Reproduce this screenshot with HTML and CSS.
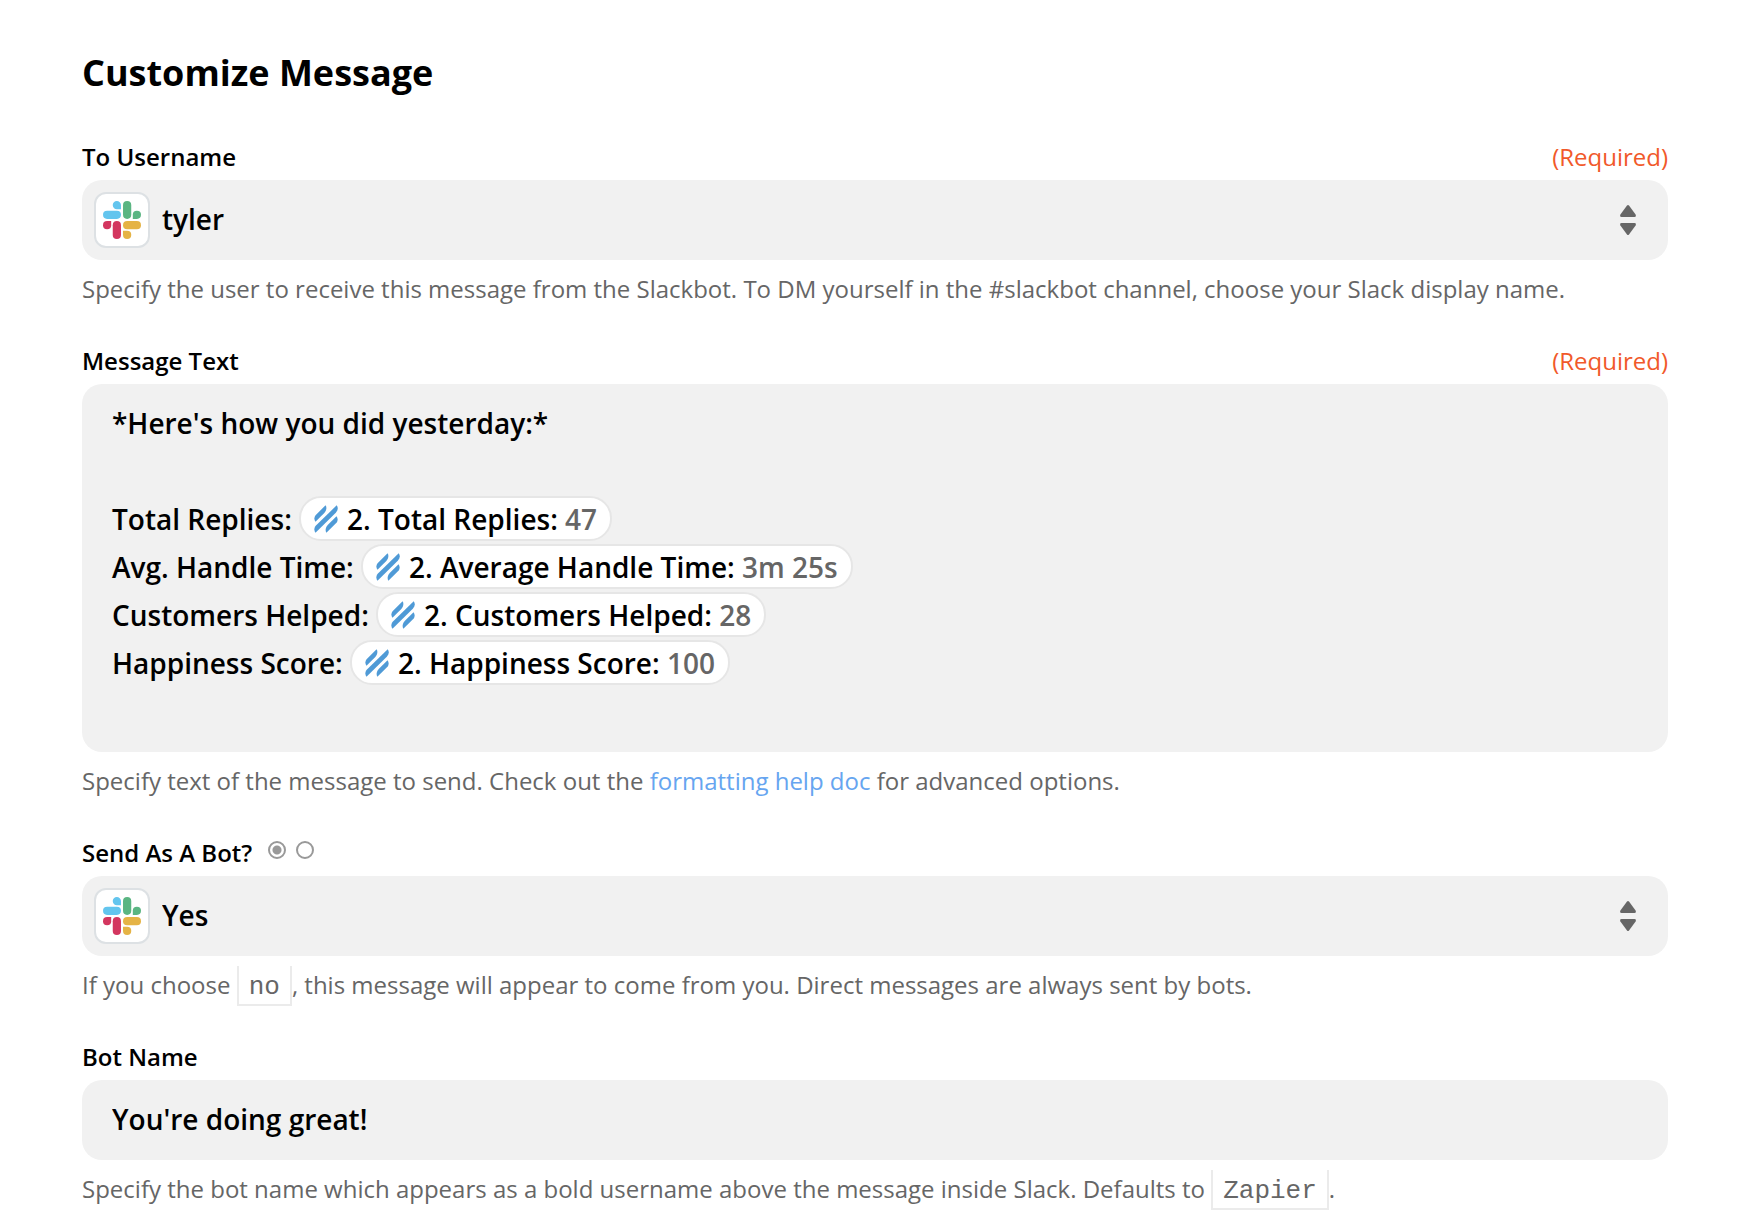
FILE: index.html
```html
<!DOCTYPE html>
<html lang="en">
<head>
    <meta charset="UTF-8">
    <meta name="viewport" content="width=device-width, initial-scale=1">
    <title>Customize Message</title>
    <link rel="stylesheet" href="styles.css">
</head>
<body>
<!-- shared icons -->
<svg class="sprite" aria-hidden="true">
    <symbol id="slack" viewBox="0 0 37 37">
        <g fill="#63c5ee">
            <path d="M17.500 8H13.700a4 4 0 1 1 3.800-4z"/>
            <rect x="0" y="9.500" width="17.500" height="8" rx="4"/>
        </g>
        <g fill="#5ab582">
            <rect x="19.500" y="0" width="8" height="17.500" rx="4"/>
            <path d="M29 17.500V13.500a4 4 0 1 1 4 4z"/>
        </g>
        <g fill="#d3365f">
            <path d="M8 19.500V23.500a4 4 0 1 1-4-4z"/>
            <rect x="9.500" y="19.500" width="8" height="17.500" rx="4"/>
        </g>
        <g fill="#e5b345">
            <rect x="19.500" y="19.500" width="17.500" height="8" rx="4"/>
            <path d="M19.500 29H23.500a4 4 0 1 1-4 4z"/>
        </g>
    </symbol>
    <symbol id="helpscout" viewBox="0 0 24 28">
        <g fill="#4f9ad6">
            <path d="M1.500 16.800 10.300 8C12.500 5.600 13 2.600 11.600.300L2.300 9.400C0 11.800-.2 14.500 1.500 16.800z"/>
            <path d="M1.500 27.700 21.800 7.700C24 5.400 24.400 2.600 22.700.300L2.200 20.300C0 22.600-.2 25.400 1.500 27.700z"/>
            <path d="M22.500 11.200 13.700 20C11.500 22.400 11 25.400 12.400 27.700L21.700 18.600C24 16.200 24.200 13.500 22.500 11.200z"/>
        </g>
    </symbol>
    <symbol id="arrows" viewBox="0 0 16 30">
        <g fill="#666">
            <path d="M7 .6Q8-.4 9 .6L15.600 9.400Q16.500 12 14.500 12H1.500Q-.5 12 .4 9.400z"/>
            <path d="M7 29.400Q8 30.400 9 29.400L15.600 20.600Q16.500 18 14.500 18H1.500Q-.5 18 .4 20.600z"/>
        </g>
    </symbol>
</svg>

<form class="container">
    <h1>Customize Message</h1>

    <div class="field">
        <div class="field-head">
            <label for="username">To Username</label>
            <span class="required">(Required)</span>
        </div>
        <div class="select">
            <span class="app-icon"><svg><use href="#slack"/></svg></span>
            <select id="username">
                <option selected>tyler</option>
            </select>
            <svg class="arrows"><use href="#arrows"/></svg>
        </div>
        <p class="help">Specify the user to receive this message from the Slackbot. To DM yourself in the #slackbot channel, choose your Slack display name.</p>
    </div>

    <div class="field">
        <div class="field-head">
            <span class="label" id="message-label">Message Text</span>
            <span class="required">(Required)</span>
        </div>
        <div class="editor" contenteditable="true" role="textbox" aria-multiline="true" aria-labelledby="message-label" spellcheck="false">
            <div>*Here's how you did yesterday:*</div>
            <div><br></div>
            <div>Total Replies: <span class="chip" contenteditable="false"><svg><use href="#helpscout"/></svg>2. Total Replies: <span class="value">47</span></span></div>
            <div>Avg. Handle Time: <span class="chip" contenteditable="false"><svg><use href="#helpscout"/></svg>2. Average Handle Time: <span class="value">3m 25s</span></span></div>
            <div>Customers Helped: <span class="chip" contenteditable="false"><svg><use href="#helpscout"/></svg>2. Customers Helped: <span class="value">28</span></span></div>
            <div>Happiness Score: <span class="chip" contenteditable="false"><svg><use href="#helpscout"/></svg>2. Happiness Score: <span class="value">100</span></span></div>
            <div><br></div>
        </div>
        <p class="help">Specify text of the message to send. Check out the <a href="#">formatting help doc</a> for advanced options.</p>
    </div>

    <div class="field">
        <div class="field-head">
            <label for="as-bot">Send As A Bot?</label>
            <span class="radios">
                <input type="radio" name="mode" aria-label="Choose from list" checked>
                <input type="radio" name="mode" aria-label="Use custom value">
            </span>
        </div>
        <div class="select">
            <span class="app-icon"><svg><use href="#slack"/></svg></span>
            <select id="as-bot">
                <option selected>Yes</option>
                <option>No</option>
            </select>
            <svg class="arrows"><use href="#arrows"/></svg>
        </div>
        <p class="help">If you choose <code>no</code>, this message will appear to come from you. Direct messages are always sent by bots.</p>
    </div>

    <div class="field">
        <div class="field-head">
            <label for="bot-name">Bot Name</label>
        </div>
        <input class="text" id="bot-name" type="text" value="You're doing great!">
        <p class="help">Specify the bot name which appears as a bold username above the message inside Slack. Defaults to <code>Zapier</code>.</p>
    </div>
</form>
</body>
</html>
```
FILE: styles.css
```css
* {
    box-sizing: border-box;
}
body {
    margin: 0;
    background: #fff;
    color: #000;
    font-family: "Open Sans", sans-serif;
    font-size: 24px;
}
.sprite {
    position: absolute;
    width: 0;
    height: 0;
}
.container {
    padding: 48px 88px 20px 82px;
}
h1 {
    margin: 0 0 40px;
    font-size: 36px;
    font-weight: 700;
    line-height: 50px;
}

/* field */
.field {
    margin-bottom: 32px;
}
.field:last-child {
    margin-bottom: 0;
}
.field-head {
    display: flex;
    align-items: center;
    height: 38px;
    margin-bottom: 4px;
    line-height: 38px;
}
.field-head label,
.field-head .label {
    font-weight: 600;
}
.required {
    margin-left: auto;
    color: #f1592a;
}
.help {
    margin: 10px 0 0;
    min-height: 40px;
    line-height: 38px;
    color: #666;
    overflow: hidden;
}
.help a {
    color: #66a5f0;
    text-decoration: none;
}
.help code {
    display: inline-block;
    height: 40px;
    padding: 0 10px;
    border: 2px solid #ebebeb;
    border-top: none;
    font-family: "Liberation Mono", monospace;
    font-size: 26px;
    line-height: 42px;
    vertical-align: top;
}

/* controls */
select,
.text,
.editor {
    display: block;
    width: 100%;
    border: none;
    border-radius: 20px;
    background: #f1f1f1;
    color: #000;
    font-family: inherit;
    font-size: 28px;
    font-weight: 600;
    outline: none;
}
select,
.text {
    height: 80px;
    padding: 0 30px 2px;
}
.select {
    position: relative;
}
select {
    appearance: none;
    padding: 0 80px 2px;
}
.app-icon {
    position: absolute;
    left: 12px;
    top: 12px;
    display: flex;
    align-items: center;
    justify-content: center;
    width: 56px;
    height: 56px;
    border: 2px solid #dde1e4;
    border-radius: 12px;
    background: #fff;
}
.app-icon svg {
    width: 38px;
    height: 38px;
}
.arrows {
    position: absolute;
    right: 32px;
    top: 25px;
    width: 16px;
    height: 30px;
    pointer-events: none;
}
.editor {
    min-height: 368px;
    padding: 15px 30px 17px;
    line-height: 48px;
}
.chip {
    display: inline-flex;
    align-items: center;
    height: 45px;
    margin-top: 1px;
    padding: 0 13px;
    border: 2px solid #e6e6e6;
    border-radius: 22px;
    background: #fff;
    line-height: 40px;
    vertical-align: top;
    white-space: pre;
}
.chip svg {
    width: 24px;
    height: 28px;
    margin-right: 9px;
}
.chip .value {
    color: #666;
}

.radios {
    display: flex;
    gap: 10px;
    margin-left: 16px;
}
.radios input {
    appearance: none;
    width: 18px;
    height: 18px;
    margin: 0 0 6px;
    border: 2px solid #999;
    border-radius: 50%;
    background: #fff;
}
.radios input:checked {
    background: radial-gradient(circle, #999 4px, #fff 5px);
}
```
